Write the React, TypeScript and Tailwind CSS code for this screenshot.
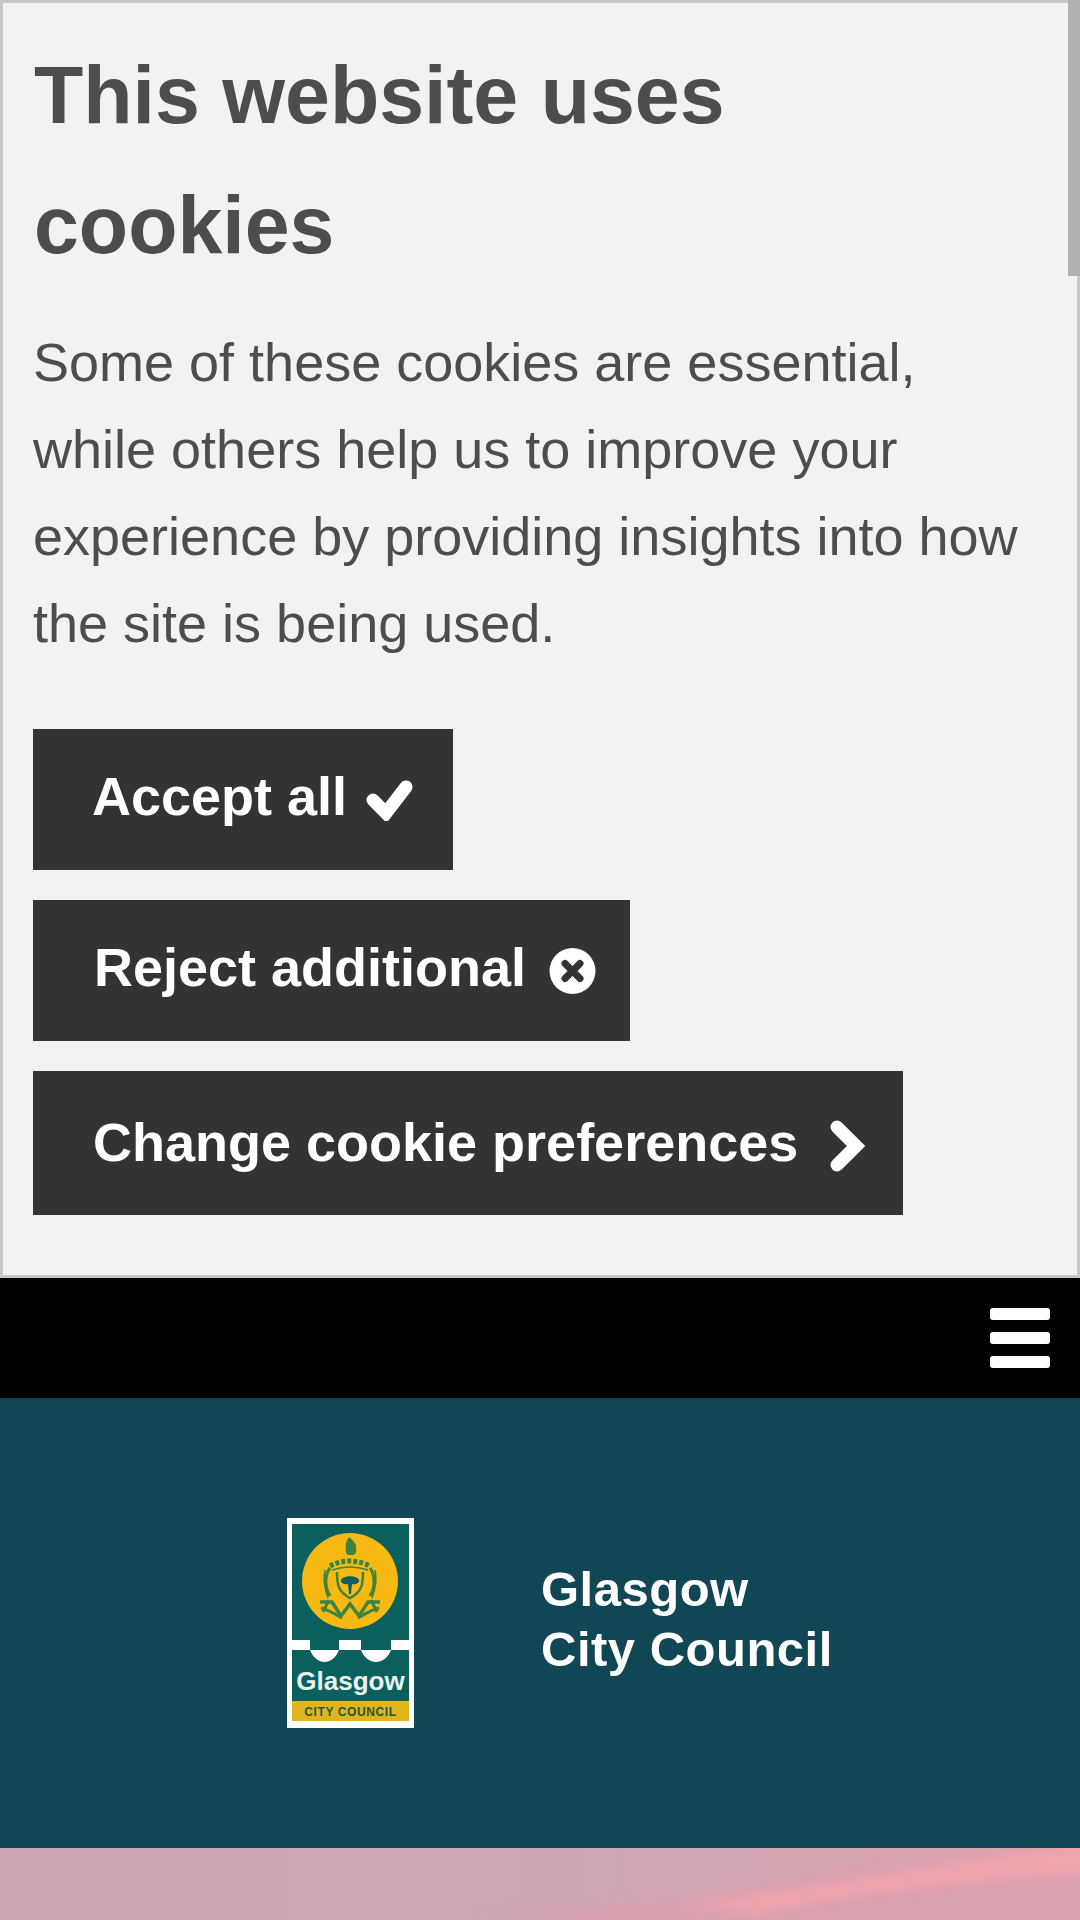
import React from 'react';

const font = { fontFamily: '"Liberation Sans", Arial, sans-serif' };

const Logo: React.FC = () => (
  <svg width="127" height="210" viewBox="0 0 127 210" className="block shrink-0">
    <rect width="127" height="210" fill="#ffffff" />
    <rect x="5" y="6" width="117" height="177" fill="#0b5f5c" />
    <circle cx="63" cy="63" r="48" fill="#f7b912" />
    {/* crest */}
    <path d="M62 19c-3 4-4 8-3 11-1 3 0 6 2 7h5c3-1 4-4 3-7 1-4-3-8-7-11z" fill="#3e8340" />
    <g fill="none" stroke="#3e8340">
      <path d="M43 48c6-3 13-5 20-5s14 2 20 5" strokeWidth="5" strokeDasharray="4 2" />
      <path d="M45 52c6-2 12-3 18-3s12 1 18 3" strokeWidth="1.500" />
      <path d="M50 54c0 12 1 20 13 26 12-6 13-14 13-26" strokeWidth="2.500" />
      <path d="M43 50c-6 8-5 20 0 28M83 50c6 8 5 20 0 28" strokeWidth="3" />
      <path d="M38 52c-2 9 0 20 3 28M88 52c2 9 0 20-3 28" strokeWidth="1.500" />
      <path d="M33 84h12l9 14 9-12 9 12 9-14h12" strokeWidth="3.500" />
      <path d="M34 90c8 2 14 6 21 10M92 90c-8 2-14 6-21 10M42 82l-6 12M84 82l6 12" strokeWidth="3" />
    </g>
    <path d="M54 62c2-5 16-5 18 0 1 3-4 5-7 4l-1 10h-2l-1-10c-3 1-8-1-7-4z" fill="#0b5f5c" />
    {/* bridge */}
    <rect x="0" y="122" width="23" height="10" fill="#ffffff" />
    <rect x="52" y="122" width="22" height="10" fill="#ffffff" />
    <rect x="104" y="122" width="23" height="10" fill="#ffffff" />
    <path d="M23 132h29c-3 8-9 12-14.500 12S26 140 23 132z" fill="#ffffff" />
    <path d="M74 132h30c-3 8-9 12-15 12s-12-4-15-12z" fill="#ffffff" />
    <text x="63.500" y="172" textAnchor="middle" fill="#e8f4f0" fontSize="26" fontWeight="700" style={font}>Glasgow</text>
    <rect x="5" y="183" width="117" height="20" fill="#e0b41c" />
    <text x="63.500" y="198" textAnchor="middle" fill="#1f5a3c" fontSize="12" fontWeight="700" letterSpacing="0.600" style={font}>CITY COUNCIL</text>
  </svg>
);

const Sky: React.FC = () => (
  <div className="h-[72px] bg-gradient-to-r from-[#cda7b6] via-[#cfa6b5] to-[#dca3ae] overflow-hidden">
    <svg width="1080" height="72" viewBox="0 0 1080 72" className="block">
      <defs>
        <filter id="soft"><feGaussianBlur stdDeviation="6" /></filter>
      </defs>
      <path d="M480 72C620 60 800 40 1090 0V72z" fill="#dba0ae" filter="url(#soft)" />
      <path d="M680 56C820 42 960 10 1090 -4v30C960 34 860 44 760 66z" fill="#f2a5ad" filter="url(#soft)" />
      <path d="M800 72C880 52 980 44 1090 36V72z" fill="#d9a5af" filter="url(#soft)" />
    </svg>
  </div>
);

const CheckIcon = () => (
  <svg width="50" height="42" viewBox="0 0 50 42" className="ml-[18px] mt-[6px]">
    <path d="M8 21l13 13L41 8" fill="none" stroke="#fff" strokeWidth="13" strokeLinecap="round" strokeLinejoin="miter" />
  </svg>
);

const RejectIcon = () => (
  <svg width="47" height="46" viewBox="0 0 47 46" className="ml-[23px] mt-[6px]">
    <circle cx="23.500" cy="23" r="23" fill="#fff" />
    <path d="M16 15.500l15 15M31 15.500L16 30.500" stroke="#333333" strokeWidth="7" strokeLinecap="round" />
  </svg>
);

const ChevronIcon = () => (
  <svg width="36" height="52" viewBox="0 0 36 52" className="ml-[31px] mt-[8px]">
    <path d="M8 7l19 19L8 45" fill="none" stroke="#fff" strokeWidth="13" strokeLinecap="round" strokeLinejoin="miter" />
  </svg>
);

const App: React.FC = () => {
  const buttons = [
    { label: 'Accept all', icon: <CheckIcon />, cls: 'w-[420px] h-[141px] pl-[59px] pb-[6px]' },
    { label: 'Reject additional', icon: <RejectIcon />, cls: 'w-[597px] h-[141px] pl-[61px] pb-[6px]' },
    { label: 'Change cookie preferences', icon: <ChevronIcon />, cls: 'w-[870px] h-[144px] pl-[60px] pb-[2px]' },
  ];

  return (
    <div className="w-[1080px] h-[1920px] overflow-hidden bg-white" style={font}>
      <div className="relative h-[1278px] bg-[#f2f2f2] border-[3px] border-[#c8c8c8] pl-[30px] pt-[27px]">
        <h1 className="text-[80.700px] leading-[130px] font-bold text-[#4d4d4d] w-[800px] pl-[1px]">
          This website uses cookies
        </h1>
        <p className="mt-[29px] text-[54px] leading-[87px] text-[#4d4d4d] w-[1000px]">
          Some of these cookies are essential, while others help us to improve your experience by providing insights into how the site is being used.
        </p>
        <div className="mt-[62px] flex flex-col items-start gap-[30px]">
          {buttons.map((b) => (
            <button key={b.label} className={`flex items-center bg-[#333333] text-white text-[54px] font-bold whitespace-nowrap ${b.cls}`}>
              {b.label}
              {b.icon}
            </button>
          ))}
        </div>
        {/* scrollbar */}
        <div className="absolute -top-[3px] -right-[3px] w-[12px] h-[276px] bg-[#b0b0b0]" />
      </div>

      <div className="h-[120px] bg-black flex items-center justify-end pr-[30px]">
        <div className="flex flex-col gap-3">
          <div className="w-[60px] h-3 bg-white rounded-[3px]" />
          <div className="w-[60px] h-3 bg-white rounded-[3px]" />
          <div className="w-[60px] h-3 bg-white rounded-[3px]" />
        </div>
      </div>

      <div className="h-[450px] bg-[#114654] flex items-center pl-[287px]">
        <Logo />
        <div className="ml-[127px] mb-[8px] text-white text-[49px] leading-[60px] font-bold tracking-[0.5px]">
          Glasgow
          <br />
          City Council
        </div>
      </div>

      <Sky />
    </div>
  );
};

export default App;
